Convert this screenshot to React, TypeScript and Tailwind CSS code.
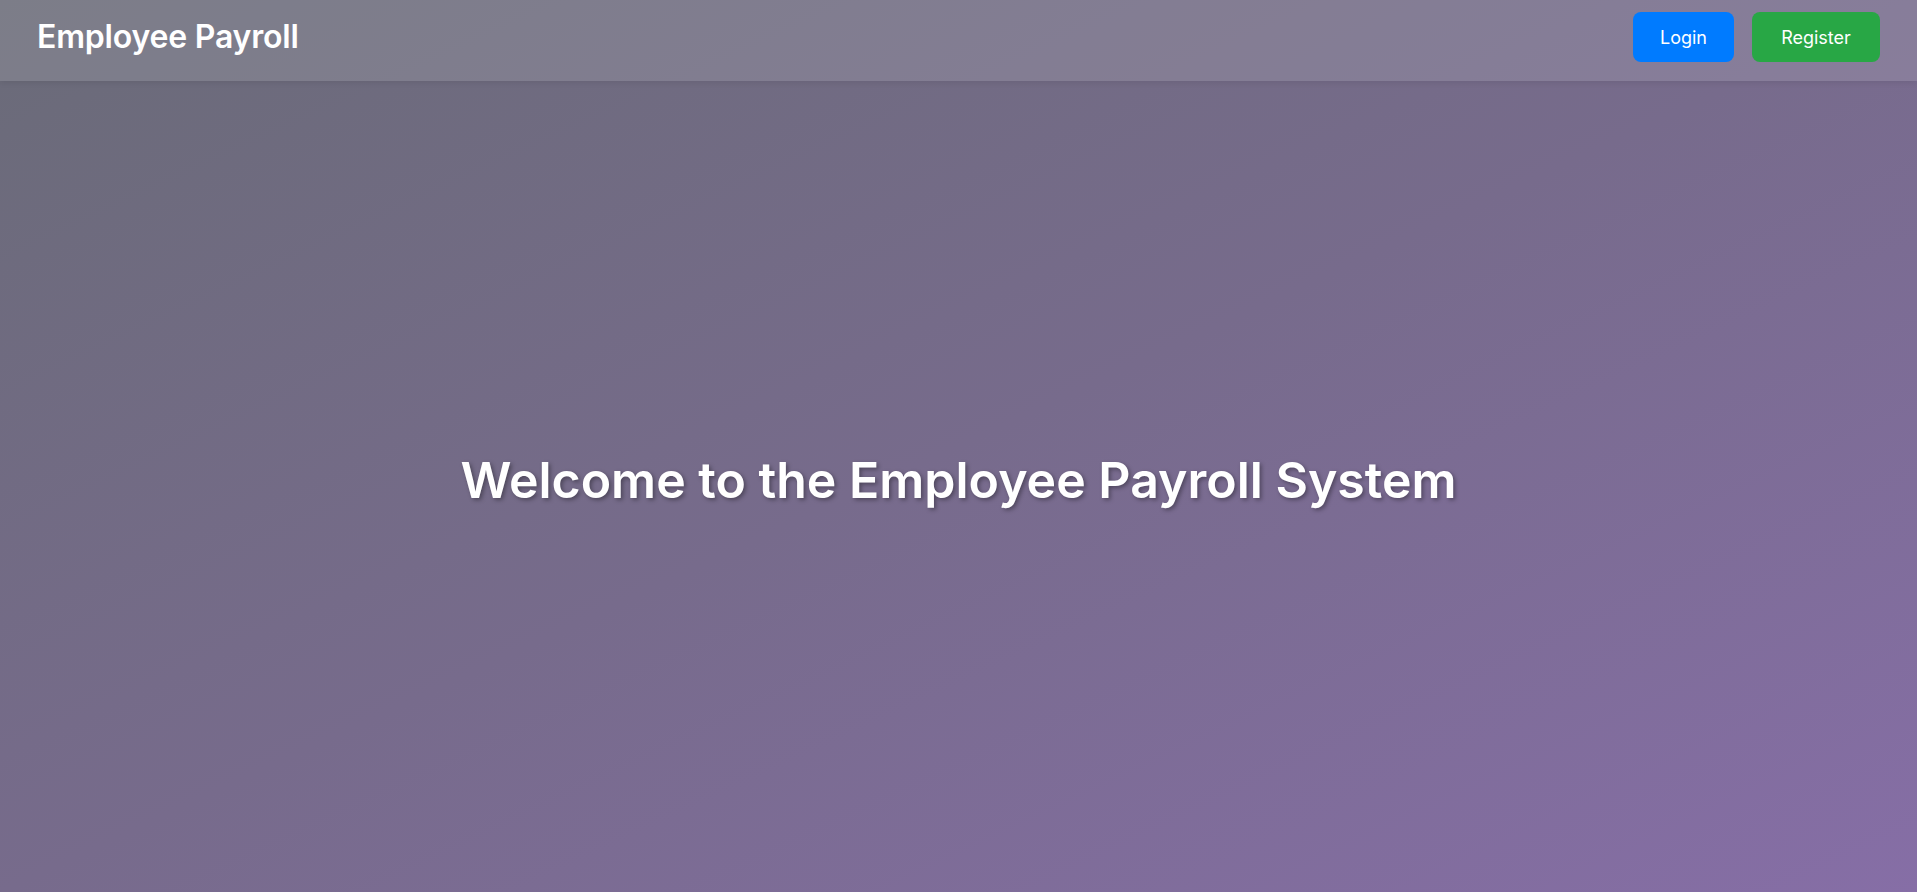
export default function App() {
  return (
    <div
      className="min-h-screen h-[892px] flex flex-col bg-gradient-to-br from-[#6a6b78] via-[#776b8c] to-[#866ea6] text-white"
      style={{ fontFamily: 'Inter, "Open Sans", sans-serif' }}
    >
      <nav className="h-[81px] shrink-0 flex items-center justify-between px-[37px] pb-[7px] bg-white/[0.12] shadow-[0_2px_6px_rgba(0,0,0,0.08)]">
        <h1 className="text-[32px] font-semibold tracking-[-0.2px]">Employee Payroll</h1>
        <div className="flex items-center gap-[18px]">
          <button className="w-[101px] h-[50px] rounded-lg bg-[#007bff] text-[18px] font-normal">
            Login
          </button>
          <button className="w-[128px] h-[50px] rounded-lg bg-[#28a745] text-[18px] font-normal">
            Register
          </button>
        </div>
      </nav>
      <main className="flex-1 flex items-center justify-center pb-[12px]">
        <h2 className="text-[50px] font-semibold [text-shadow:2px_2px_4px_rgba(0,0,0,0.35)]">
          Welcome to the Employee Payroll System
        </h2>
      </main>
    </div>
  )
}
